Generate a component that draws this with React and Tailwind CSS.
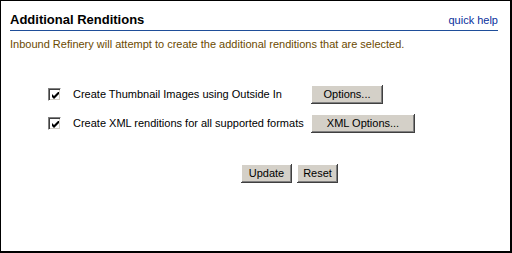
import React from 'react';

const font = { fontFamily: '"Liberation Sans", Arial, sans-serif' };

function Checkbox() {
  return (
    <span className="flex h-[13px] w-[13px] shrink-0 items-center justify-center border border-b-white border-l-[#808080] border-r-white border-t-[#808080] bg-white shadow-[inset_1px_1px_#404040,inset_-1px_-1px_#d4d0c8]">
      <svg width="7" height="7" viewBox="0 0 7 7" className="ml-[1px] mt-[1px]">
        <path d="M0 2 L2 4 L7 -1 L7 2 L2 7 L0 5 Z" fill="#000" />
      </svg>
    </span>
  );
}

function Btn({ children, w }) {
  return (
    <button
      className={`h-[19px] ${w} bg-[#d4d0c8] text-[11px] leading-none text-black shadow-[inset_-1px_-1px_#404040,inset_1px_1px_#ffffff,inset_-2px_-2px_#808080]`}
    >
      {children}
    </button>
  );
}

export default function App() {
  return (
    <div
      style={font}
      className="h-[253px] w-[512px] border-b-2 border-l border-r-2 border-t border-black bg-white pl-[9px] pr-[12px]"
    >
      {/* header */}
      <div className="flex h-[30px] items-end justify-between border-b border-[#1f4e9a] pb-[4px]">
        <h1 className="text-[13px] font-bold leading-none text-black">Additional Renditions</h1>
        <a className="text-[11px] leading-none text-[#0a2f9c]">quick help</a>
      </div>
      <p className="mt-[8px] text-[11px] leading-none text-[#6b4a00]">
        Inbound Refinery will attempt to create the additional renditions that are selected.
      </p>

      {/* options */}
      <div className="mt-[35px] flex flex-col gap-[10px] pl-[38px]">
        <div className="flex items-center">
          <Checkbox />
          <span className="ml-[12px] w-[238px] whitespace-nowrap text-[11px] leading-none text-black">
            Create Thumbnail Images using Outside In
          </span>
          <Btn w="w-[72px]">Options...</Btn>
        </div>
        <div className="flex items-center">
          <Checkbox />
          <span className="ml-[12px] w-[238px] whitespace-nowrap text-[11px] leading-none text-black">
            Create XML renditions for all supported formats
          </span>
          <Btn w="w-[104px]">XML Options...</Btn>
        </div>
      </div>

      <div className="mt-[31px] flex gap-[5px] pl-[231px]">
        <Btn w="w-[51px]">Update</Btn>
        <Btn w="w-[41px]">Reset</Btn>
      </div>
    </div>
  );
}
